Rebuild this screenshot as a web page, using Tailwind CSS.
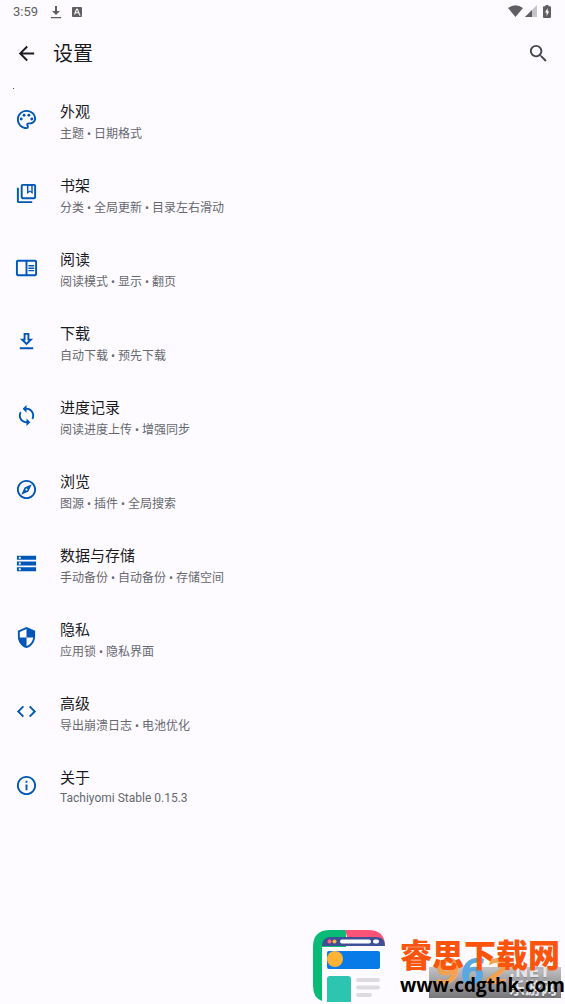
<!DOCTYPE html>
<html lang="zh-CN">
<head>
<meta charset="utf-8">
<meta name="viewport" content="width=device-width, initial-scale=1">
<title>设置</title>
<script src="https://cdn.jsdelivr.net/npm/@tailwindcss/browser@4"></script>
</head>
<body class="relative flex min-h-screen flex-col bg-[#fdfbff] font-[Roboto,'Noto_Sans_CJK_SC',sans-serif] text-[#1b1b1f]">
<!-- Status bar -->
<div class="flex h-6 items-center justify-between pr-[14px] pl-[13px] text-[#5f5f61]">
  <div class="flex items-center">
    <span class="text-[13px] leading-6">3:59</span>
    <svg class="ml-3 h-[14px] w-3" viewBox="0 0 12 14" fill="currentColor"><path d="M5 1h2v5h3L6 10 2 6h3zM1 12h10v1.300H1z"/></svg>
    <svg class="ml-[10px] size-[10px]" viewBox="0 0 10 10"><rect width="10" height="10" rx="1" fill="currentColor"/><path d="M2.500 7.500 4.500 2.300h1l2 5.200M3.300 5.800h3.400M7 8h1.500" fill="none" stroke="#fff" stroke-width="1.100"/></svg>
  </div>
  <div class="flex items-center pb-[2px]">
    <svg class="h-3 w-[15px]" viewBox="0 0 15 12" fill="currentColor"><path d="M0 3Q7.500-2.500 15 3L7.500 12z"/></svg>
    <svg class="ml-[2px] size-3" viewBox="0 0 12 12" fill="currentColor"><path d="M12 0v12H0z" opacity=".35"/><path d="M7 5v7H0z"/></svg>
    <svg class="ml-[6px] h-[13px] w-2" viewBox="0 0 8 13"><path d="M2.500 0h3v1.200H7a1 1 0 0 1 1 1V12a1 1 0 0 1-1 1H1a1 1 0 0 1-1-1V2.200a1 1 0 0 1 1-1h1.500z" fill="currentColor"/><path d="M4.700 3 2 7.500h1.600V11L6.200 6.400H4.700z" fill="#fff"/></svg>
  </div>
</div>

<!-- App bar -->
<header class="flex h-[58px] items-center pr-[15px] pl-[15px]">
  <button type="button" aria-label="返回"><svg class="size-[23px]" viewBox="0 0 24 24" fill="currentColor"><path d="M20 11H7.830l5.590-5.590L12 4l-8 8 8 8 1.410-1.410L7.830 13H20v-2z"/></svg></button>
  <h1 class="ml-[15px] flex-1 pt-[2px] text-[20px] leading-7">设置</h1>
  <button type="button" aria-label="搜索" class="text-[#45464f]"><svg class="size-[23px]" viewBox="0 0 24 24" fill="currentColor"><path d="M15.500 14h-.79l-.28-.27A6.470 6.470 0 0 0 16 9.500 6.500 6.500 0 1 0 9.500 16c1.610 0 3.090-.59 4.230-1.570l.27.28v.79l5 4.990L20.490 19l-4.990-5zm-6 0C7.010 14 5 11.990 5 9.500S7.010 5 9.500 5 14 7.010 14 9.500 11.990 14 9.500 14z"/></svg></button>
</header>
<div class="mt-[6px] ml-[13px] size-px bg-[#55555a]"></div>

<main>
<ul>
  <li><a href="#appearance" class="flex h-[74px] items-start gap-[22px] px-[15px] pt-[11px]">
    <svg class="mt-2 size-[23px] shrink-0 text-[#0057b8]" viewBox="0 0 24 24" fill="currentColor"><path d="M12 22C6.490 22 2 17.510 2 12S6.490 2 12 2s10 4.040 10 9c0 3.310-2.690 6-6 6h-1.770c-.28 0-.5.22-.5.5 0 .12.05.23.13.33.41.47.64 1.060.64 1.670A2.500 2.500 0 0 1 12 22zm0-18c-4.410 0-8 3.590-8 8s3.590 8 8 8c.28 0 .5-.22.5-.5a.54.54 0 0 0-.14-.35c-.41-.46-.63-1.050-.63-1.650a2.500 2.500 0 0 1 2.500-2.500H16c2.210 0 4-1.790 4-4 0-3.860-3.590-7-8-7z"/><circle cx="6.500" cy="11.500" r="1.500"/><circle cx="9.500" cy="7.500" r="1.500"/><circle cx="14.500" cy="7.500" r="1.500"/><circle cx="17.500" cy="11.500" r="1.500"/></svg>
    <div><div class="text-[15px] leading-6">外观</div><div class="text-[12px] leading-5 text-[#67686f]">主题 • 日期格式</div></div></a></li>
  <li><a href="#library" class="flex h-[74px] items-start gap-[22px] px-[15px] pt-[11px]">
    <svg class="mt-2 size-[23px] shrink-0 text-[#0057b8]" viewBox="0 0 24 24" fill="currentColor"><path d="M4 6H2v14c0 1.100.9 2 2 2h14v-2H4V6z"/><path d="M20 2H8c-1.100 0-2 .9-2 2v12c0 1.100.9 2 2 2h12c1.100 0 2-.9 2-2V4c0-1.100-.9-2-2-2zm0 14H8V4h12v12z"/><path d="M12.500 3h6v9.500l-3-2.200-3 2.200zM14 4v6l1.500-1.100L17 10V4z" fill-rule="evenodd"/></svg>
    <div><div class="text-[15px] leading-6">书架</div><div class="text-[12px] leading-5 text-[#67686f]">分类 • 全局更新 • 目录左右滑动</div></div></a></li>
  <li><a href="#reader" class="flex h-[74px] items-start gap-[22px] px-[15px] pt-[11px]">
    <svg class="mt-2 size-[23px] shrink-0 text-[#0057b8]" viewBox="0 0 24 24" fill="currentColor"><path d="M21 4H3c-1.100 0-2 .9-2 2v13c0 1.100.9 2 2 2h18c1.100 0 2-.9 2-2V6c0-1.100-.9-2-2-2zM3 19V6h8v13H3zm18 0h-8V6h8v13zm-7-9.500h6V11h-6zm0 2.500h6v1.500h-6zm0 2.500h6V16h-6z"/></svg>
    <div><div class="text-[15px] leading-6">阅读</div><div class="text-[12px] leading-5 text-[#67686f]">阅读模式 • 显示 • 翻页</div></div></a></li>
  <li><a href="#downloads" class="flex h-[74px] items-start gap-[22px] px-[15px] pt-[11px]">
    <svg class="mt-2 size-[23px] shrink-0 text-[#0057b8]" viewBox="0 0 24 24" fill="currentColor"><path d="M19 9h-4V3H9v6H5l7 7 7-7zm-8 2V5h2v6h1.170L12 13.170 9.830 11H11zm-6 7h14v2H5z"/></svg>
    <div><div class="text-[15px] leading-6">下载</div><div class="text-[12px] leading-5 text-[#67686f]">自动下载 • 预先下载</div></div></a></li>
  <li><a href="#tracking" class="flex h-[74px] items-start gap-[22px] px-[15px] pt-[11px]">
    <svg class="mt-2 size-[23px] shrink-0 text-[#0057b8]" viewBox="0 0 24 24" fill="currentColor"><path d="M12 4V1L8 5l4 4V6c3.310 0 6 2.690 6 6 0 1.010-.25 1.970-.7 2.800l1.460 1.460A7.930 7.930 0 0 0 20 12c0-4.420-3.580-8-8-8zm0 14c-3.310 0-6-2.690-6-6 0-1.010.25-1.970.7-2.800L5.240 7.740A7.930 7.930 0 0 0 4 12c0 4.420 3.580 8 8 8v3l4-4-4-4v3z"/></svg>
    <div><div class="text-[15px] leading-6">进度记录</div><div class="text-[12px] leading-5 text-[#67686f]">阅读进度上传 • 增强同步</div></div></a></li>
  <li><a href="#browse" class="flex h-[74px] items-start gap-[22px] px-[15px] pt-[11px]">
    <svg class="mt-2 size-[23px] shrink-0 text-[#0057b8]" viewBox="0 0 24 24" fill="currentColor"><path d="M12 2C6.480 2 2 6.480 2 12s4.480 10 10 10 10-4.480 10-10S17.520 2 12 2zm0 18c-4.410 0-8-3.590-8-8s3.590-8 8-8 8 3.590 8 8-3.590 8-8 8zm-5.500-2.500 7.510-3.490L17.500 6.500 9.990 9.990 6.500 17.500zm5.500-6.600c.61 0 1.100.49 1.100 1.100s-.49 1.100-1.100 1.100-1.100-.49-1.100-1.100.49-1.100 1.100-1.100z"/></svg>
    <div><div class="text-[15px] leading-6">浏览</div><div class="text-[12px] leading-5 text-[#67686f]">图源 • 插件 • 全局搜索</div></div></a></li>
  <li><a href="#data" class="flex h-[74px] items-start gap-[22px] px-[15px] pt-[11px]">
    <svg class="mt-2 size-[23px] shrink-0 text-[#0057b8]" viewBox="0 0 24 24" fill="currentColor"><path d="M2 20h20v-4H2v4zm2-3h2v2H4v-2zM2 4v4h20V4H2zm4 3H4V5h2v2zm-4 7h20v-4H2v4zm2-3h2v2H4v-2z"/></svg>
    <div><div class="text-[15px] leading-6">数据与存储</div><div class="text-[12px] leading-5 text-[#67686f]">手动备份 • 自动备份 • 存储空间</div></div></a></li>
  <li><a href="#privacy" class="flex h-[74px] items-start gap-[22px] px-[15px] pt-[11px]">
    <svg class="mt-2 size-[23px] shrink-0 text-[#0057b8]" viewBox="0 0 24 24" fill="currentColor"><path d="M12 1 3 5v6c0 5.550 3.840 10.740 9 12 5.160-1.260 9-6.450 9-12V5l-9-4zm0 10.990h7c-.53 4.120-3.280 7.790-7 8.940V12H5V6.300l7-3.110v8.800z"/></svg>
    <div><div class="text-[15px] leading-6">隐私</div><div class="text-[12px] leading-5 text-[#67686f]">应用锁 • 隐私界面</div></div></a></li>
  <li><a href="#advanced" class="flex h-[74px] items-start gap-[22px] px-[15px] pt-[11px]">
    <svg class="mt-2 size-[23px] shrink-0 text-[#0057b8]" viewBox="0 0 24 24" fill="currentColor"><path d="M9.400 16.600 4.800 12l4.600-4.600L8 6l-6 6 6 6 1.400-1.400zm5.200 0 4.600-4.600-4.600-4.600L16 6l6 6-6 6-1.400-1.400z"/></svg>
    <div><div class="text-[15px] leading-6">高级</div><div class="text-[12px] leading-5 text-[#67686f]">导出崩溃日志 • 电池优化</div></div></a></li>
  <li><a href="#about" class="flex h-[74px] items-start gap-[22px] px-[15px] pt-[11px]">
    <svg class="mt-2 size-[23px] shrink-0 text-[#0057b8]" viewBox="0 0 24 24" fill="currentColor"><path d="M11 7h2v2h-2zm0 4h2v6h-2zm1-9C6.480 2 2 6.480 2 12s4.480 10 10 10 10-4.480 10-10S17.520 2 12 2zm0 18c-4.410 0-8-3.590-8-8s3.590-8 8-8 8 3.590 8 8-3.590 8-8 8z"/></svg>
    <div><div class="text-[15px] leading-6">关于</div><div class="text-[12px] leading-4 text-[#67686f]">Tachiyomi Stable 0.15.3</div></div></a></li>
</ul>
</main>

<!-- Site watermark over the lower right corner -->
<div class="absolute right-1 bottom-0 flex h-[75px] items-start gap-[14px]">
  <svg class="h-[73px] w-[74px]" viewBox="0 0 74 73">
    <path d="M34 1H18Q1 1 1 18v39q0 12 9 15V18h24z" fill="#0abb78"/>
    <path d="M33 1h23q17 0 17 16H38z" fill="#ff5277"/>
    <path d="M10 17Q10 8 19 8h45q9 0 9 9z" fill="#3f4f96"/>
    <circle cx="17.500" cy="12.500" r="2" fill="#ff6685"/><circle cx="22.500" cy="12.500" r="2" fill="#ffb431"/>
    <rect x="28" y="10.500" width="31" height="4" rx="2" fill="#fff"/><rect x="61" y="10.500" width="6" height="4" rx="2" fill="#fff"/>
    <rect x="15" y="22" width="53" height="18" rx="2" fill="#087be8"/><circle cx="23" cy="30" r="8" fill="#ffb336"/>
    <path d="M18 47h18q3 0 3 3v23H15V50q0-3 3-3z" fill="#2cc5b1"/>
    <path d="M46 51h20M46 58.500h20M46 66h12" stroke="#dcdcdf" stroke-width="4" stroke-linecap="round"/>
  </svg>
  <div class="relative w-[161px] whitespace-nowrap">
    <div class="absolute top-[38px] right-0 flex h-[31px] w-[132px] justify-end bg-linear-to-b from-[#c4c4c6] to-[#77777a]">
      <div class="absolute -top-[17px] left-[6px] font-['DejaVu_Sans','Liberation_Sans',sans-serif] text-[36px] leading-[44px] font-bold text-[#f6a14f] italic">9<span class="text-[#59a8e2]">6</span>2</div>
      <div class="-mt-1 pr-1 font-['DejaVu_Sans','Noto_Sans_CJK_SC',sans-serif] text-[16px] leading-[17px] font-bold text-[#e6e6e8] text-shadow-sm"><div>.NET</div><div>乐游网</div></div>
    </div>
    <div class="relative pt-[2px] font-['Noto_Sans_CJK_SC',sans-serif] text-[32px] leading-[44px] font-black text-[#fa540d]">睿思下载网</div>
    <div class="relative -mt-[2px] font-['Open_Sans',sans-serif] text-[19px] leading-6 font-bold text-black">www.cdgthk.com</div>
  </div>
</div>
</body>
</html>
